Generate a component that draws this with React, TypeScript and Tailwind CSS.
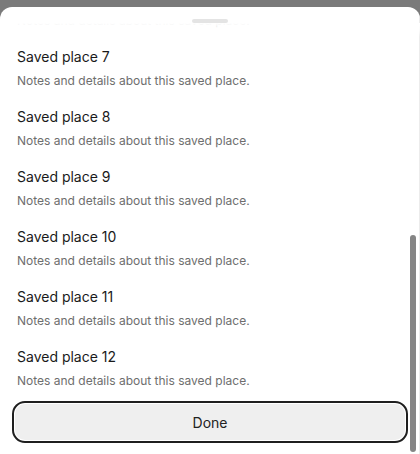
const places = Array.from({ length: 12 }, (_, i) => ({
  id: i + 1,
  title: `Saved place ${i + 1}`,
  note: "Notes and details about this saved place.",
}));

export default function App() {
  return (
    <div className="h-[454px] overflow-hidden bg-[#7a7a7a] pt-[7px] font-['Inter',sans-serif]">
      <div className="relative flex h-full flex-col overflow-hidden rounded-t-[12px] bg-white">
        {/* drag handle sits over the list */}
        <div className="absolute left-1/2 top-[12px] z-20 h-[4px] w-[36px] -translate-x-1/2 rounded-full bg-[#e4e4e4]" />
        <div className="pointer-events-none absolute inset-x-0 top-[16px] z-10 h-[14px] bg-gradient-to-b from-white via-white/80 to-white/0" />

        {/* list, scrolled to the end */}
        <div className="mt-[16px] flex min-h-0 flex-1 flex-col justify-end overflow-hidden">
          {places.map((p) => (
            <div key={p.id} className="h-[60px] shrink-0 px-[17px] pt-[13px]">
              <p className="text-[14px] leading-[22px] text-[#1a1a1a]">{p.title}</p>
              <p className="mt-1 text-[12px] leading-[18px] text-[#6e6e6e]">{p.note}</p>
            </div>
          ))}
        </div>

        <div className="shrink-0 px-[15px] pb-[14px] pt-[11px]">
          <button className="h-9 w-full rounded-[10px] bg-[#efefef] text-[14px] text-[#222] outline-2 outline-offset-1 outline-[#1f1f1f] outline-solid">
            Done
          </button>
        </div>

        {/* scrollbar */}
        <div className="absolute bottom-0 right-0 top-[6px] w-px bg-[#ececec]" />
        <div className="absolute right-[4px] top-[228px] h-[217px] w-[6px] rounded-full bg-[#858585]" />
      </div>
    </div>
  );
}
